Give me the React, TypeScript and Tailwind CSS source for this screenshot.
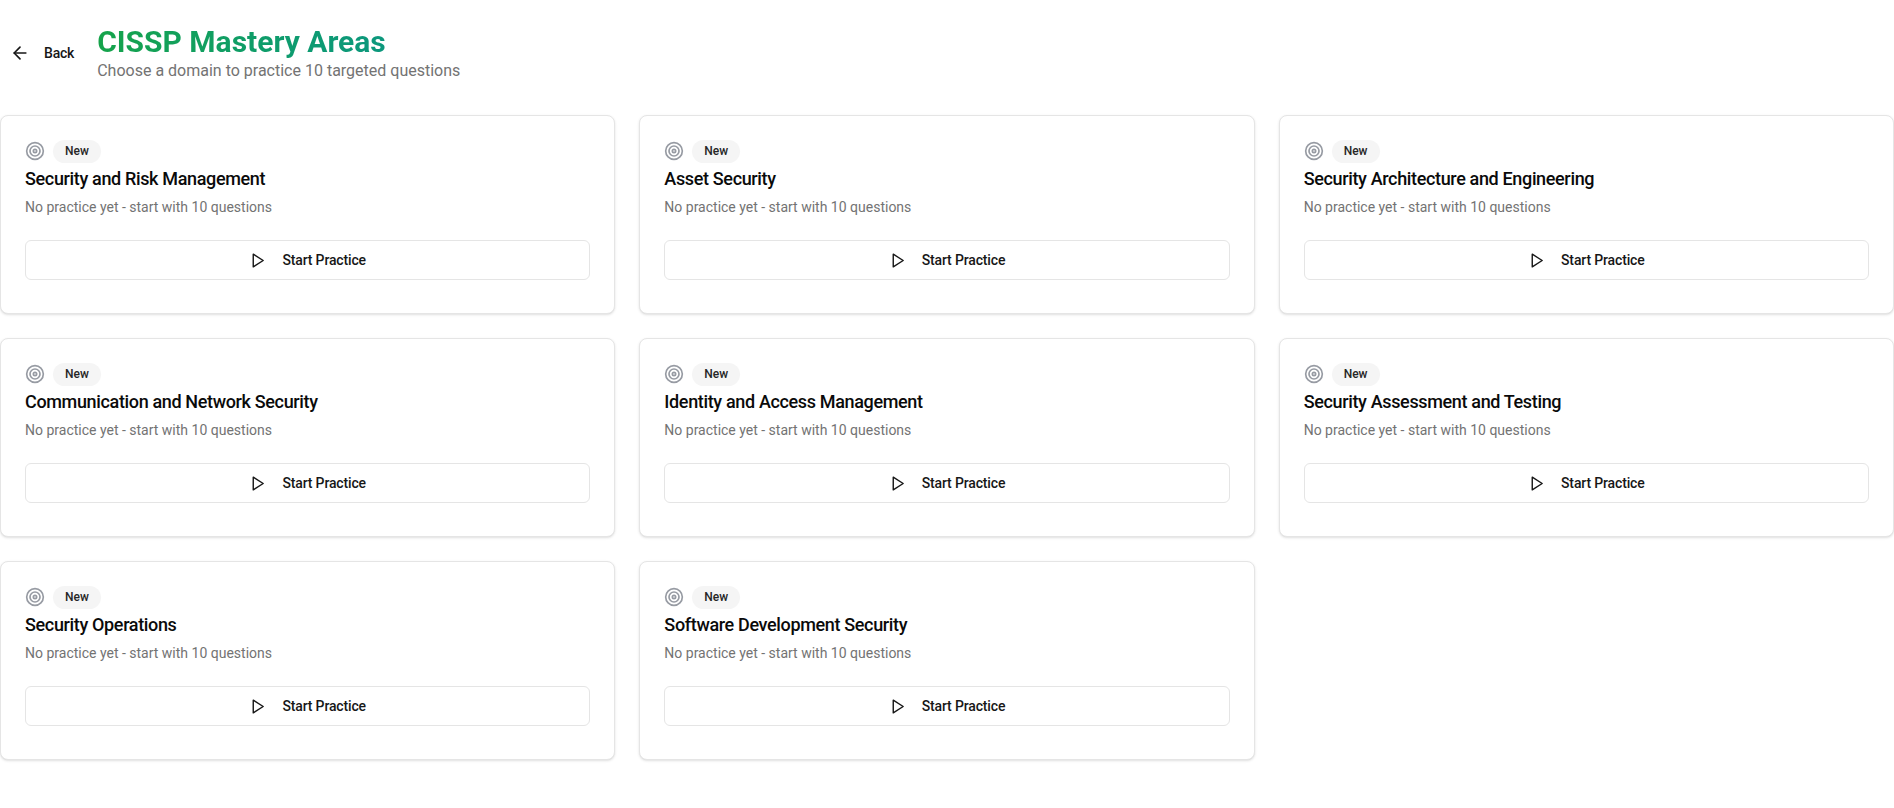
import { ArrowLeft, Target } from "lucide-react";

const DOMAINS = [
  "Security and Risk Management",
  "Asset Security",
  "Security Architecture and Engineering",
  "Communication and Network Security",
  "Identity and Access Management",
  "Security Assessment and Testing",
  "Security Operations",
  "Software Development Security",
];

function PlayIcon() {
  return (
    <svg
      viewBox="0 0 24 24"
      fill="none"
      stroke="currentColor"
      strokeWidth="2"
      strokeLinejoin="round"
      strokeLinecap="round"
      className="mr-2 h-[17px] w-[17px]"
    >
      <polygon points="6 3 20 12 6 21 6 3" />
    </svg>
  );
}

function DomainCard({ name }: { name: string }) {
  return (
    <div className="rounded-lg border border-[#e5e5e5] bg-white px-6 pt-6 pb-[33px] shadow-sm">
      <div className="flex h-[22px] items-center gap-2">
        <Target className="h-5 w-5 text-[#979ba3]" />
        <span className="rounded-full bg-[#f5f5f5] px-3 py-[3px] text-xs font-medium leading-[17px] text-[#262626]">
          New
        </span>
      </div>
      <h3 className="mt-[3px] text-lg font-medium leading-7 tracking-[-0.35px] text-[#0a0a0a]">{name}</h3>
      <p className="mt-1 text-sm leading-5 text-[#737373]">
        No practice yet - start with 10 questions
      </p>
      <button className="mt-[23px] flex h-10 w-full items-center justify-center gap-2 rounded-md border border-[#e5e5e5] bg-white text-sm font-medium tracking-[-0.15px] text-[#171717]">
        <PlayIcon />
        Start Practice
      </button>
    </div>
  );
}

export default function App() {
  return (
    <div className="min-h-screen bg-white font-['Roboto',sans-serif]">
      <header className="flex items-center gap-[13px] pt-6 pb-[34px]">
        <button className="mt-px flex h-10 items-center gap-3.5 px-2.5 text-sm font-medium tracking-[-0.2px] text-[#171717]">
          <ArrowLeft className="h-5 w-5" />
          Back
        </button>
        <div>
          <h1 className="bg-gradient-to-r from-[#16a34a] to-[#0d9488] bg-clip-text text-3xl font-bold leading-9 text-transparent">
            CISSP Mastery Areas
          </h1>
          <p className="mt-px text-base leading-5 text-[#737373]">
            Choose a domain to practice 10 targeted questions
          </p>
        </div>
      </header>
      <div className="grid grid-cols-3 gap-6">
        {DOMAINS.map((name) => (
          <DomainCard key={name} name={name} />
        ))}
      </div>
    </div>
  );
}
